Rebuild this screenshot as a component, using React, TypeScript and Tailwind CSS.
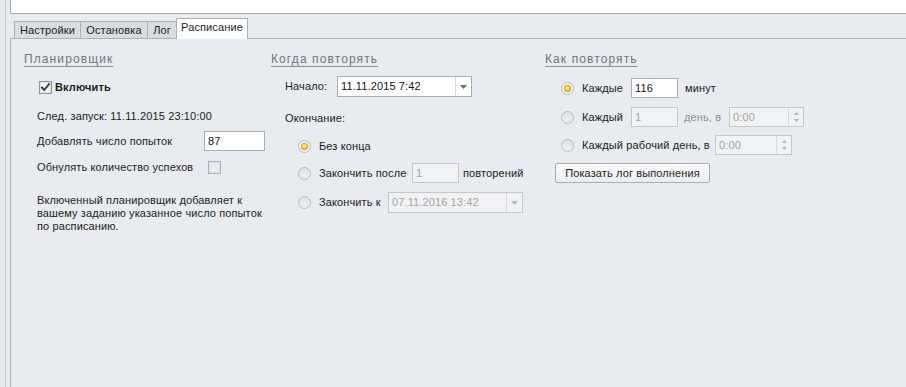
import type { ReactNode } from "react";

const font = "font-['Liberation_Sans','DejaVu_Sans',sans-serif]";

function Header({ children }: { children: ReactNode }) {
  return (
    <div className="h-[16px] text-[12px] leading-[16px] tracking-[1.1px] text-[#6f757c] underline decoration-[#8a9097] underline-offset-[3px]">
      {children}
    </div>
  );
}

function Checkbox({ checked }: { checked?: boolean }) {
  return (
    <svg width="13" height="13" viewBox="0 0 13 13" className="shrink-0">
      <rect x="0.5" y="0.5" width="12" height="12" fill="#f3f4f5" stroke={checked ? "#8c9399" : "#a9afb5"} />
      <rect x="1.5" y="1.5" width="10" height="10" fill={checked ? "#f7f7f7" : "#e9ebee"} stroke="#dfe2e5" />
      {checked ? (
        <path d="M3 6.5 L5.2 9 L10 3.2" fill="none" stroke="#3f3f3f" strokeWidth="1.9" strokeLinecap="square" />
      ) : null}
    </svg>
  );
}

function Radio({ checked }: { checked?: boolean }) {
  return (
    <svg width="13" height="13" viewBox="0 0 13 13" className="shrink-0">
      <circle cx="6.5" cy="6.5" r="6" fill={checked ? "#f4f4f2" : "url(#radioOff)"} stroke="#b4b8be" />
      {checked ? (
        <circle cx="6.5" cy="6.5" r="3.3" fill="url(#radioDot)" stroke="#e0952a" strokeWidth="0.8" />
      ) : (
        <circle cx="6.5" cy="6.5" r="4" fill="none" stroke="#e2e4e7" strokeWidth="1" />
      )}
    </svg>
  );
}

function TextBox({ value, width, disabled }: { value: string; width: string; disabled?: boolean }) {
  return (
    <div
      className={`${width} h-[20px] shrink-0 flex items-center pl-[3px] border ${
        disabled ? "border-[#c3c7cc] bg-[#f1f2f3] text-[#a3a3a3]" : "border-[#a9aeb5] bg-white text-[#111]"
      }`}
    >
      {value}
    </div>
  );
}

function Combo({ value, disabled }: { value: string; disabled?: boolean }) {
  return (
    <div
      className={`w-[135px] h-[21px] shrink-0 flex border ${
        disabled ? "border-[#c3c7cc] bg-[#f1f2f3] text-[#a3a3a3]" : "border-[#a9aeb5] bg-white text-[#111]"
      }`}
    >
      <div className="flex-1 flex items-center pl-[3px]">{value}</div>
      <div className="w-[16px] flex items-center justify-center border-l border-[#d6d9dd]">
        <svg width="7" height="4" viewBox="0 0 7 4">
          <path d="M0 0 H7 L3.5 4 Z" fill={disabled ? "#b5b8bc" : "#6a6e73"} />
        </svg>
      </div>
    </div>
  );
}

function TimeBox({ value, width }: { value: string; width: string }) {
  return (
    <div className={`${width} h-[20px] shrink-0 flex border border-[#c3c7cc] bg-[#f1f2f3] text-[#a3a3a3]`}>
      <div className="flex-1 flex items-center pl-[3px]">{value}</div>
      <div className="w-[15px] flex flex-col items-center justify-center gap-[4px] border-l border-[#d6d9dd]">
        <svg width="5" height="3" viewBox="0 0 5 3">
          <path d="M0 3 H5 L2.5 0 Z" fill="#b2b5b9" />
        </svg>
        <svg width="5" height="3" viewBox="0 0 5 3">
          <path d="M0 0 H5 L2.5 3 Z" fill="#b2b5b9" />
        </svg>
      </div>
    </div>
  );
}

const tabs = [
  { label: "Настройки", width: "w-[66px]" },
  { label: "Остановка", width: "w-[67px]" },
  { label: "Лог", width: "w-[29px]" },
];

export default function App() {
  return (
    <div className={`${font} w-[906px] h-[387px] overflow-hidden bg-[#e8ebef] text-[11px] leading-[13px] tracking-[0.12px] text-[#1c1c1c] pl-[5px] whitespace-nowrap`}>
      <svg width="0" height="0" className="absolute">
        <defs>
          <radialGradient id="radioDot" cx="0.45" cy="0.4" r="0.6">
            <stop offset="0" stopColor="#fff2a8" />
            <stop offset="0.55" stopColor="#f9c94a" />
            <stop offset="1" stopColor="#f0a125" />
          </radialGradient>
          <linearGradient id="radioOff" x1="0" y1="0" x2="0" y2="1">
            <stop offset="0" stopColor="#dcdfe3" />
            <stop offset="1" stopColor="#f3f4f6" />
          </linearGradient>
        </defs>
      </svg>
      <div className="h-full border-l border-[#c5cad0] pl-[4px] flex flex-col">
        <div className="h-[14px] shrink-0 bg-white border-l border-b border-[#a4aab1]" />

        <div className="h-[24px] shrink-0 flex items-end pl-[4px]">
          {tabs.map((tab) => (
            <div
              key={tab.label}
              className={`${tab.width} h-[17px] flex items-center justify-center border-l border-t border-[#aab0b7] bg-[#d9dde2]`}
            >
              {tab.label}
            </div>
          ))}
          <div className="relative z-10 -mb-px w-[72px] h-[21px] flex items-center justify-center border-l border-t border-r border-[#aab0b7] bg-white pb-[3px]">
            Расписание
          </div>
        </div>

        <div className="flex-1 border-l border-t border-[#aab0b7] pt-[12px] pl-[13px] flex">
          <div className="w-[247px] shrink-0 flex flex-col">
            <Header>Планировщик</Header>
            <div className="mt-[10px] h-[20px] flex items-center pl-[15px] gap-[3px]">
              <Checkbox checked />
              <span className="font-bold">Включить</span>
            </div>
            <div className="mt-[9px] h-[20px] flex items-center pl-[13px]">След. запуск: 11.11.2015 23:10:00</div>
            <div className="mt-[5px] h-[20px] flex items-center pl-[13px]">
              <span className="w-[167px] shrink-0">Добавлять число попыток</span>
              <TextBox value="87" width="w-[61px]" />
            </div>
            <div className="mt-[6px] h-[20px] flex items-center pl-[13px]">
              <span className="w-[171px] shrink-0">Обнулять количество успехов</span>
              <Checkbox />
            </div>
            <p className="mt-[17px] pl-[13px]">
              Включенный планировщик добавляет к
              <br />
              вашему заданию указанное число попыток
              <br />
              по расписанию.
            </p>
          </div>

          <div className="w-[274px] shrink-0 flex flex-col">
            <Header>Когда повторять</Header>
            <div className="mt-[9px] h-[21px] flex items-center pl-[14px]">
              <span className="w-[52px] shrink-0">Начало:</span>
              <Combo value="11.11.2015 7:42" />
            </div>
            <div className="mt-[11px] h-[20px] flex items-center pl-[14px]">Окончание:</div>
            <div className="mt-[8px] h-[20px] flex items-center pl-[27px]">
              <Radio checked />
              <span className="ml-[8px]">Без конца</span>
            </div>
            <div className="mt-[7px] h-[20px] flex items-center pl-[27px]">
              <Radio />
              <span className="ml-[8px] w-[93px] shrink-0">Закончить после</span>
              <TextBox value="1" width="w-[47px]" disabled />
              <span className="ml-[4px]">повторений</span>
            </div>
            <div className="mt-[9px] h-[21px] flex items-center pl-[27px]">
              <Radio />
              <span className="ml-[8px] w-[69px] shrink-0">Закончить к</span>
              <Combo value="07.11.2016 13:42" disabled />
            </div>
          </div>

          <div className="flex-1 flex flex-col">
            <Header>Как повторять</Header>
            <div className="mt-[11px] h-[20px] flex items-center pl-[16px]">
              <Radio checked />
              <span className="ml-[8px] w-[49px] shrink-0">Каждые</span>
              <TextBox value="116" width="w-[47px]" />
              <span className="ml-[7px]">минут</span>
            </div>
            <div className="mt-[9px] h-[20px] flex items-center pl-[16px]">
              <Radio />
              <span className="ml-[8px] w-[49px] shrink-0">Каждый</span>
              <TextBox value="1" width="w-[47px]" disabled />
              <span className="ml-[6px] w-[45px] shrink-0 text-[#8d9197]">день, в</span>
              <TimeBox value="0:00" width="w-[75px]" />
            </div>
            <div className="mt-[8px] h-[20px] flex items-center pl-[16px]">
              <Radio />
              <span className="ml-[8px] w-[133px] shrink-0">Каждый рабочий день, в</span>
              <TimeBox value="0:00" width="w-[77px]" />
            </div>
            <div className="mt-[8px] pl-[10px]">
              <button
                type="button"
                className="w-[155px] h-[20px] flex items-center justify-center rounded-[2px] border border-[#a8adb4] bg-gradient-to-b from-[#fbfbfb] to-[#ebecee] text-[#1c1c1c]"
              >
                Показать лог выполнения
              </button>
            </div>
          </div>
        </div>
      </div>
    </div>
  );
}
